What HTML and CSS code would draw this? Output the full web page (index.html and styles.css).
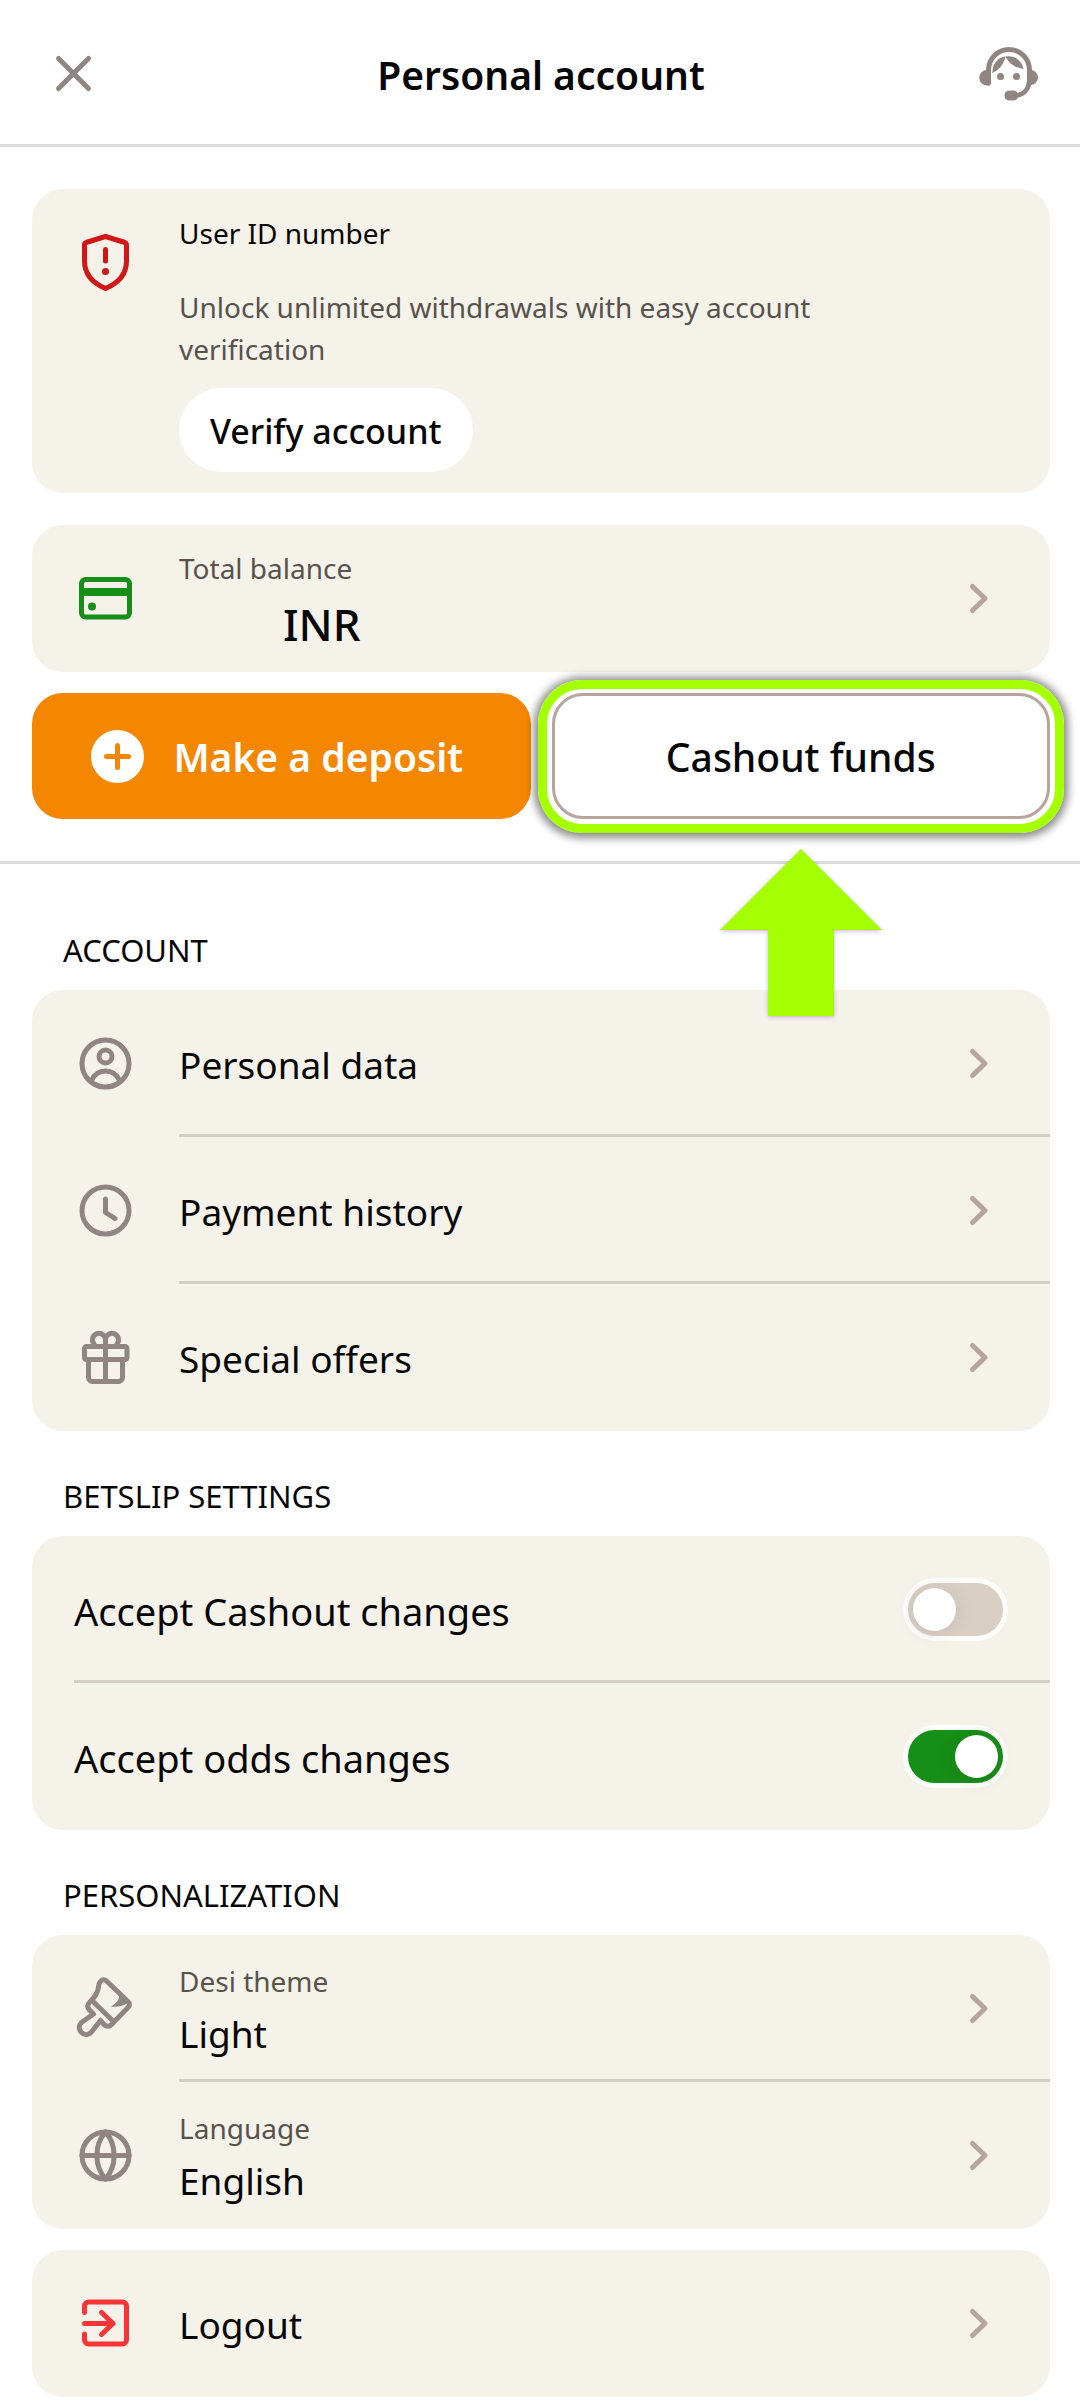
FILE: index.html
```html
<!DOCTYPE html>
<html lang="en">
<head>
<meta charset="utf-8">
<meta name="viewport" content="width=device-width, initial-scale=1">
<title>Personal account</title>
<link rel="stylesheet" href="styles.css">
</head>
<body>
<svg class="defs" aria-hidden="true">
  <symbol id="chevron" viewBox="0 0 63 63"><path d="M24.5 19.5l12.500 12-12.500 12"/></symbol>
</svg>

<header class="topbar">
  <button class="icon-button" type="button" aria-label="Close">
    <svg class="icon" viewBox="0 0 63 63"><path d="M16.500 16.500l30 30M46.500 16.500l-30 30"/></svg>
  </button>
  <h1 class="title">Personal account</h1>
  <button class="icon-button" type="button" aria-label="Support">
    <svg class="icon" viewBox="0 0 63 63">
      <path d="M11.500 41V28a20.500 20.500 0 0 1 41 0v8c0 10-5 17-14 17.500"/>
      <g class="solid">
        <path d="M13 28v15.500H10a7.500 7.500 0 0 1 0-15.500zM52 28h1.500a7.500 7.500 0 0 1 0 15H51z"/>
        <path d="M33 48.500h3q5 0 5 5t-5 5h-3q-5.500 0-5.500-5t5.500-5z"/>
        <path d="M15.500 31C15 22 21 15 28.500 14.500 27 22 22 28 15.500 31zM28.500 14.500C37 13 45 18 46.500 27 39 26 32 22 28.500 14.500z"/>
        <circle cx="23.500" cy="34.500" r="3.500"/><circle cx="39.500" cy="34.500" r="3.500"/>
      </g>
    </svg>
  </button>
</header>

<main>
  <section class="summary">
    <div class="card verify">
      <svg class="icon icon-alert" viewBox="0 0 63 63">
        <path d="M31.500 5.500l19.500 6q1.500.5 1.500 2.500v16c0 13-8 22-21 27.500C18.500 52 10.500 43 10.500 30V14q0-2 1.500-2.500z"/>
        <path d="M31.500 18.500v11.500"/><circle class="solid" cx="31.500" cy="40.500" r="3.500"/>
      </svg>
      <div class="verify-body">
        <h2 class="verify-title">User ID number</h2>
        <p class="verify-text">Unlock unlimited withdrawals with easy account verification</p>
        <button class="pill" type="button">Verify account</button>
      </div>
    </div>

    <div class="card balance">
      <a class="row" href="#balance">
        <svg class="icon icon-card" viewBox="0 0 63 63">
          <rect x="7.500" y="12.500" width="48" height="37.500" rx="4"/>
          <path class="solid" d="M7 21h49v8H7z"/><circle class="solid" cx="18" cy="39.500" r="4"/>
        </svg>
        <span class="stack"><span class="caption">Total balance</span><span class="amount">INR</span></span>
        <svg class="icon icon-chevron"><use href="#chevron"/></svg>
      </a>
    </div>

    <div class="actions">
      <button class="action deposit" type="button">
        <svg class="icon" viewBox="0 0 63 63"><circle class="disc" cx="31.500" cy="31.500" r="26.500"/><path class="plus" d="M31.500 20.500v22M20.500 31.500h22"/></svg>
        <span class="action-text">Make a deposit</span>
      </button>
      <div class="highlight">
        <button class="action cashout" type="button"><span class="action-text">Cashout funds</span></button>
        <svg class="pointer" viewBox="0 0 162 168" aria-hidden="true"><path d="M81 0l81 81h-48v86H48V81H0z"/></svg>
      </div>
    </div>
  </section>

  <section class="group">
    <h2 class="label">ACCOUNT</h2>
    <nav class="card">
      <a class="row" href="#data">
        <svg class="icon" viewBox="0 0 63 63"><circle cx="31.500" cy="31.500" r="23.500"/><circle cx="31.500" cy="24.500" r="6.500"/><path d="M17.500 48.500c3-6.500 8-9.500 14-9.500s11 3 14 9.500"/></svg>
        <span class="name">Personal data</span>
        <svg class="icon icon-chevron"><use href="#chevron"/></svg>
      </a>
      <a class="row" href="#history">
        <svg class="icon" viewBox="0 0 63 63"><circle cx="31.500" cy="31.500" r="23.500"/><path d="M31.500 20v13.500l9.500 6"/></svg>
        <span class="name">Payment history</span>
        <svg class="icon icon-chevron"><use href="#chevron"/></svg>
      </a>
      <a class="row" href="#offers">
        <svg class="icon" viewBox="0 0 63 63"><rect x="10.500" y="20.500" width="42.500" height="13" rx="2"/><path d="M14.500 34v17.500a4 4 0 0 0 4 4h26a4 4 0 0 0 4-4V34M31.500 14v41M31.500 20v-6.500a6.500 6.500 0 1 0-11 5M31.500 20v-6.500a6.500 6.500 0 1 1 11 5"/></svg>
        <span class="name">Special offers</span>
        <svg class="icon icon-chevron"><use href="#chevron"/></svg>
      </a>
    </nav>
  </section>

  <section class="group">
    <h2 class="label">BETSLIP SETTINGS</h2>
    <div class="card">
      <div class="row row-switch">
        <label class="name" for="accept-cashout">Accept Cashout changes</label>
        <input class="switch" id="accept-cashout" type="checkbox">
      </div>
      <div class="row row-switch">
        <label class="name" for="accept-odds">Accept odds changes</label>
        <input class="switch" id="accept-odds" type="checkbox" checked>
      </div>
    </div>
  </section>

  <section class="group">
    <h2 class="label">PERSONALIZATION</h2>
    <div class="card">
      <a class="row" href="#theme">
        <svg class="icon" viewBox="0 0 63 63"><path d="M26 5q3-4 6.500-1L54 24.500q3 3 0 6L37.500 47.500q-3.500 3.500-7.500 0L26.500 43.500 17 55.500c-3 3-6.500 3-9.500 0s-3-7 0-10L19.500 37l-4-4q-3.500-4 0-7.500C21 20 24 16 24.500 10q0-3 1.500-5zM18 23.500l21.500 21"/><path class="solid" d="M44.500 16.500c2 5-1 9-7.500 13 7 1 12-.5 17-3.500z"/></svg>
        <span class="stack"><span class="caption">Desi theme</span><span class="value">Light</span></span>
        <svg class="icon icon-chevron"><use href="#chevron"/></svg>
      </a>
      <a class="row" href="#language">
        <svg class="icon" viewBox="0 0 63 63"><circle cx="31.500" cy="31.500" r="23.500"/><path d="M8 31.500h47M31.500 8c-11.500 13-11.500 34 0 47M31.500 8c11.500 13 11.500 34 0 47"/></svg>
        <span class="stack"><span class="caption">Language</span><span class="value">English</span></span>
        <svg class="icon icon-chevron"><use href="#chevron"/></svg>
      </a>
    </div>
    <div class="card logout">
      <a class="row" href="#logout">
        <svg class="icon icon-exit" viewBox="0 0 63 63"><path d="M10.500 20.500V14a4 4 0 0 1 4-4h34a4 4 0 0 1 4 4v34a4 4 0 0 1-4 4h-34a4 4 0 0 1-4-4v-6M10.500 31.500H39M27.500 20.500l11.500 11-11.500 11"/></svg>
        <span class="name">Logout</span>
        <svg class="icon icon-chevron"><use href="#chevron"/></svg>
      </a>
    </div>
  </section>
</main>
</body>
</html>
```
FILE: styles.css
```css
:root {
  --surface: #f5f2ea;
  --line: #d2cec5;
  --icon: #918581;
  --muted: #57534c;
}

* { box-sizing: border-box; }

body {
  margin: 0;
  background: #fff;
  color: #070707;
  font: 400 37px/54px "Noto Sans", sans-serif;
}

h1, h2, p { margin: 0; font-weight: 400; }
a { color: inherit; text-decoration: none; }
button { padding: 0; border: 0; color: inherit; font: inherit; cursor: pointer; }
.defs { position: absolute; width: 0; height: 0; }

.icon {
  flex: none;
  display: block;
  width: 63px;
  height: 63px;
  fill: none;
  stroke: var(--icon);
  stroke-width: 5px;
  stroke-linecap: round;
  stroke-linejoin: round;
}
.icon .solid { fill: var(--icon); stroke: none; }
.icon-alert { stroke: #d01616; }
.icon-alert .solid { fill: #d01616; }
.icon-card { stroke: #178e17; }
.icon-card .solid { fill: #178e17; }
.icon-exit { stroke: #fb3435; }
.icon-chevron { stroke: #b7a49c; }

.topbar {
  display: flex;
  align-items: center;
  justify-content: space-between;
  min-height: 147px;
  padding: 2px 40px 0 42px;
  border-bottom: 3px solid #dadada;
}
.icon-button { background: none; }
.title { padding-top: 4px; font-size: 39px; font-weight: 600; }

.summary {
  padding: 42px 30px 42px 32px;
  border-bottom: 3px solid #dadada;
}
.card {
  overflow: hidden;
  border-radius: 31px;
  background: var(--surface);
}

.verify {
  display: flex;
  gap: 42px;
  padding: 21px 42px;
}
.verify .icon { margin-top: 21px; }
.verify-body { max-width: 660px; padding-top: 2px; }
.verify-title, .verify-text, .caption { font-size: 28px; line-height: 42px; }
.verify-text { margin: 32px 0 18px; color: var(--muted); }
.pill {
  display: block;
  min-height: 84px;
  padding: 2px 31px 0;
  border-radius: 42px;
  background: #fff;
  font-size: 34px;
  font-weight: 500;
}

.balance { margin: 32px 0 21px; }

.row {
  display: flex;
  align-items: center;
  gap: 42px;
  min-height: 147px;
  padding: 0 39px 0 42px;
}
.row:not(:last-child) {
  background: linear-gradient(var(--line), var(--line)) 147px 100% / 100% 3px no-repeat;
}
.row-switch { padding-right: 47px; font-size: 38px; }
.row-switch:not(:last-child) { background-position-x: 42px; }
.name, .stack { flex: 1; padding-top: 2px; }
.stack { display: flex; flex-direction: column; }
.caption { line-height: 48px; color: var(--muted); }
.value { line-height: 58px; }
.amount { padding-left: 104px; font-size: 44px; font-weight: 500; line-height: 64px; }

.actions { display: grid; grid-template-columns: 1fr 1fr; gap: 21px; }
.action {
  display: flex;
  align-items: center;
  justify-content: center;
  gap: 24px;
  width: 100%;
  min-height: 126px;
  border-radius: 31px;
  font-size: 39px;
}
.action-text { padding-top: 2px; }
.deposit { padding-right: 13px; background: #f58700; color: #fff; font-weight: 600; }
.deposit .disc { fill: #fff; stroke: none; }
.deposit .plus { stroke: #f58700; }
.cashout { border: 3px solid #b7a49c; background: #fff; font-weight: 500; }

.highlight { position: relative; }
.highlight::after {
  content: "";
  position: absolute;
  inset: -13px -14px -14px;
  border: 9px solid #a4ff00;
  border-radius: 44px;
  box-shadow: 0 1px 8px 4px #0007;
  pointer-events: none;
}
.pointer {
  position: absolute;
  top: 156px;
  left: 50%;
  width: 162px;
  height: 168px;
  margin-left: -81px;
  overflow: visible;
  fill: #a4ff00;
  filter: drop-shadow(0 1px 2px #a060c080);
}

.group { padding: 0 30px 0 32px; }
.group:last-child { padding-bottom: 3px; }
.label { padding: 44px 0 19px 31px; font-size: 31px; line-height: 42px; }
.summary + .group { padding-top: 21px; }
.logout { margin-top: 21px; }

.switch {
  appearance: none;
  flex: none;
  width: 95px;
  height: 53px;
  margin: 0;
  padding: 5px;
  border-radius: 27px;
  background: #d9cfc3;
  box-shadow: 0 0 0 5px #fffc;
  cursor: pointer;
}
.switch::before {
  content: "";
  display: block;
  width: 43px;
  height: 43px;
  border-radius: 50%;
  background: #fff;
  box-shadow: 0 2px 20px #0000001a;
}
.switch:checked { background: #178e17; }
.switch:checked::before { margin-left: 42px; }
```
